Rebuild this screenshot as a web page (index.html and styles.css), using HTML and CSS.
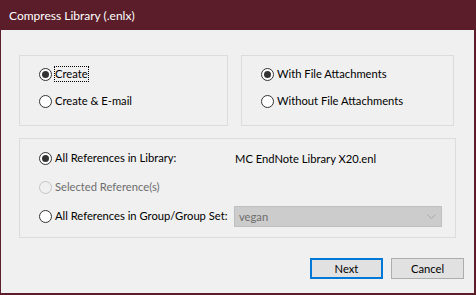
FILE: index.html
```html
<!DOCTYPE html>
<html>
<head>
<meta charset="utf-8">
<link rel="stylesheet" href="styles.css">
</head>
<body>
<div class="window">
  <div class="titlebar">Compress Library (.enlx)</div>
  <div class="content">
    <div class="top-row">
      <div class="group group-left">
        <div class="radio-row"><span class="radio checked"></span><span class="label focus">Create</span></div>
        <div class="radio-row"><span class="radio"></span><span class="label">Create &amp; E-mail</span></div>
      </div>
      <div class="group group-right">
        <div class="radio-row"><span class="radio checked"></span><span class="label">With File Attachments</span></div>
        <div class="radio-row"><span class="radio"></span><span class="label">Without File Attachments</span></div>
      </div>
    </div>
    <div class="group group-bottom">
      <div class="radio-row"><span class="radio checked"></span><span class="label">All References in Library:</span></div>
      <div class="value">MC EndNote Library X20.enl</div>
      <div class="radio-row disabled"><span class="radio"></span><span class="label">Selected Reference(s)</span></div>
      <div></div>
      <div class="radio-row"><span class="radio"></span><span class="label">All References in Group/Group Set:</span></div>
      <div class="select">
        <span>vegan</span>
        <svg class="chev" width="9" height="5" viewBox="0 0 9 5"><path d="M0.5 0.5 L4.5 4.5 L8.5 0.5" fill="none" stroke="#a8a8a8" stroke-width="1"/></svg>
      </div>
    </div>
    <div class="buttons">
      <button class="btn default">Next</button>
      <button class="btn">Cancel</button>
    </div>
  </div>
</div>
</body>
</html>
```
FILE: styles.css
```css
* { box-sizing: border-box; }
html, body { margin: 0; padding: 0; }
body {
  width: 476px;
  height: 295px;
  overflow: hidden;
  font-family: Lato, "Noto Sans", sans-serif;
  font-size: 11.2px;
  color: #000;
  background: #5b1d29;
}
.window {
  width: 476px;
  height: 295px;
  background: #f0f0f0;
  border-left: 1px solid #5b1d29;
  border-right: 2px solid #5b1d29;
  border-bottom: 2px solid #5b1d29;
  display: flex;
  flex-direction: column;
}
.titlebar {
  height: 30px;
  flex: none;
  background: #5b1d29;
  color: #fff;
  padding-left: 9px;
  display: flex;
  align-items: center;
  font-size: 12px;
  margin-left: -1px;
  margin-right: -2px;
}
.content {
  padding: 25px 0 0 18px;
  display: flex;
  flex-direction: column;
}
.top-row {
  display: flex;
  gap: 13px;
}
.group {
  border: 1px solid #dcdcdc;
}
.group-left, .group-right {
  height: 71px;
  padding: 8px 0 0 19px;
  display: flex;
  flex-direction: column;
  gap: 7px;
}
.group-left { width: 209px; }
.group-right { width: 213px; }
.group-bottom {
  margin-top: 12px;
  width: 437px;
  height: 100px;
  padding: 8px 0 0 19px;
  display: grid;
  grid-template-columns: 195px 208px;
  grid-template-rows: 22px 22px 22px;
  row-gap: 7px;
  align-items: center;
}
.radio-row {
  height: 20px;
  display: flex;
  align-items: center;
  gap: 3px;
}
.group-bottom .radio-row { height: 22px; }
.radio {
  width: 13px;
  height: 13px;
  border-radius: 50%;
  border: 1px solid #333;
  background: #fff;
  flex: none;
  display: flex;
  align-items: center;
  justify-content: center;
}
.radio.checked::after {
  content: "";
  width: 7px;
  height: 7px;
  border-radius: 50%;
  background: #333;
}
.label { white-space: nowrap; line-height: 14px; }
.focus { outline: 1px dotted #000; outline-offset: 0; }
.disabled .radio { border-color: #c4c4c4; background: #f0f0f0; }
.disabled .label { color: #6d6d6d; }
.value { padding-left: 1px; white-space: nowrap; }
.select {
  height: 21px;
  width: 208px;
  background: #cccccc;
  border: 1px solid #bfbfbf;
  color: #6d6d6d;
  display: flex;
  align-items: center;
  justify-content: space-between;
  padding: 0 4px 0 4px;
  margin-top: 1px;
}
.chev { margin-right: 1px; }
.buttons {
  margin-top: 20px;
  display: flex;
  justify-content: flex-end;
  gap: 8px;
  padding-right: 10px;
}
.btn {
  width: 73px;
  height: 21px;
  background: #e1e1e1;
  border: 1px solid #adadad;
  font-family: inherit;
  font-size: 11.2px;
  color: #000;
  padding: 0;
  margin: 0;
}
.btn.default { border: 2px solid #0078d7; }
```
